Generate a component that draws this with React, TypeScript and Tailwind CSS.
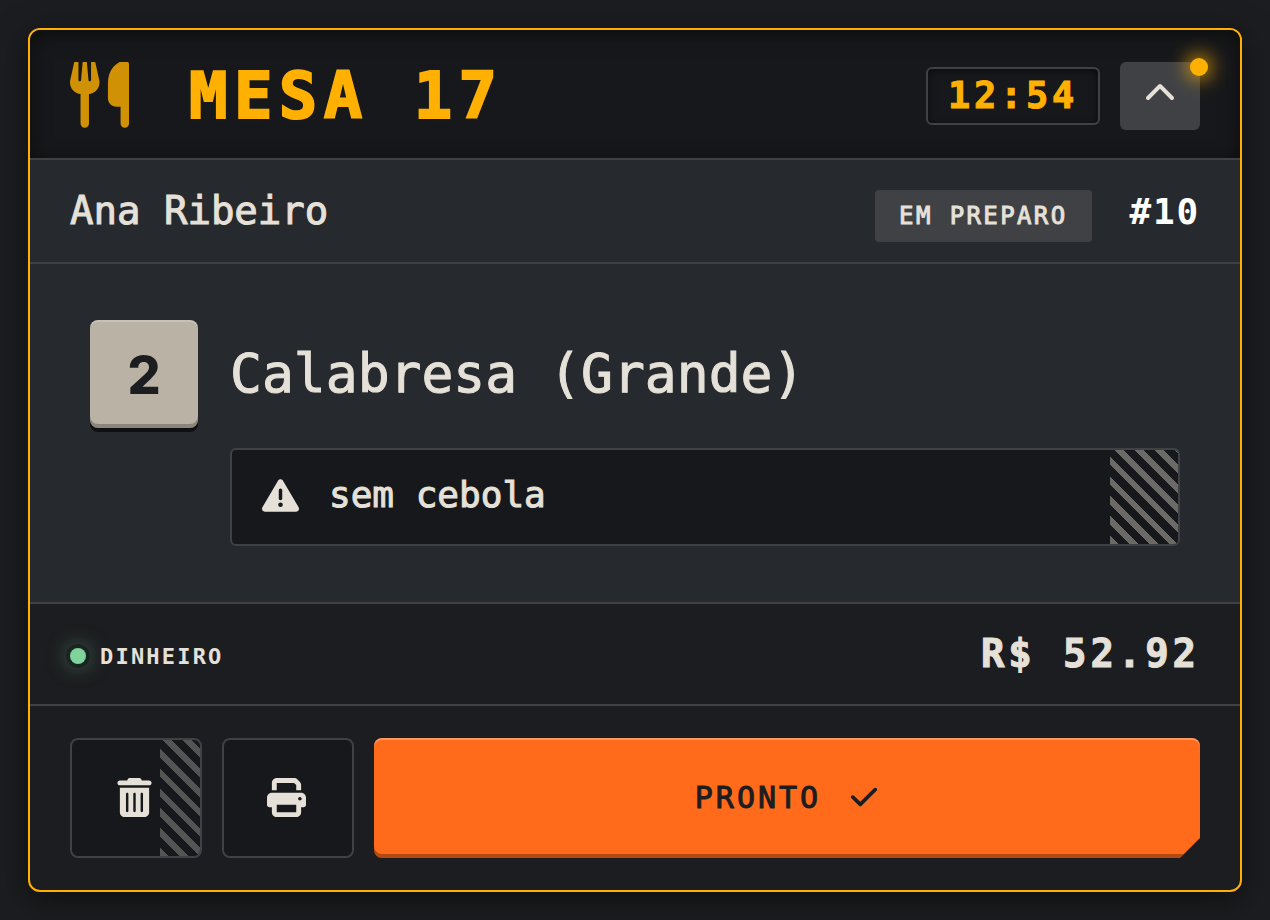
import {
  FaCheck,
  FaChevronUp,
  FaPrint,
  FaTrashCan,
  FaTriangleExclamation,
  FaUtensils,
} from "react-icons/fa6";

const iconButton =
  "relative flex h-[120px] w-[132px] shrink-0 items-center justify-center overflow-hidden rounded-lg border-2 border-[#3f4145] bg-[#17181b] pr-1 pb-0.5 text-[39px]";

function Header() {
  return (
    <header className="flex items-center justify-between border-b-2 border-[#3f4145] bg-[#17181b] px-10 pt-8 pb-7 text-[#ffb000] shadow-[inset_0_4px_20px_rgba(0,0,0,0.5)]">
      <div className="flex items-center gap-[60px]">
        <span className="flex h-[66px] items-end self-start overflow-hidden opacity-80">
          <FaUtensils className="h-[68px] w-[59px] shrink-0" />
        </span>
        <h1 className="text-[64px] leading-[68px] font-bold tracking-widest [-webkit-text-stroke:2px]">
          MESA 17
        </h1>
      </div>
      <div className="flex items-center gap-5">
        <time className="rounded-md border-2 border-[#3f4145] px-5 text-[37px] leading-[54px] font-bold tracking-widest shadow-[inset_0_2px_8px_rgba(0,0,0,0.5)] [-webkit-text-stroke:1px]">
          12:54
        </time>
        <button
          type="button"
          aria-label="Recolher pedido"
          className="relative flex h-[68px] w-20 items-center justify-center rounded-md bg-[#3f4145] pb-1 text-[32px] text-[#e6e1d8]"
        >
          <FaChevronUp />
          <span className="absolute -top-1 -right-2 size-[18px] rounded-full bg-[#ffb000] shadow-[0_0_20px_2px_#ffb000]" />
        </button>
      </div>
    </header>
  );
}

function Customer() {
  return (
    <section className="flex items-baseline justify-between border-b-2 border-[#3f4145] bg-[#262a2e] px-10 pt-[25px] pb-5">
      <h2 className="text-[39px] leading-[52px] [-webkit-text-stroke:1px]">Ana Ribeiro</h2>
      <div className="flex items-baseline gap-[38px]">
        <span className="rounded-sm bg-[#3f4145] px-6 text-2xl leading-[52px] tracking-widest [-webkit-text-stroke:1px]">
          EM PREPARO
        </span>
        <span className="text-4xl leading-[52px] font-bold tracking-wider text-white">#10</span>
      </div>
    </section>
  );
}

function Items() {
  return (
    <ul className="border-b-2 border-[#3f4145] bg-[#26292e] px-[60px] py-14">
      <li className="flex items-start gap-8">
        <span className="flex size-[108px] shrink-0 items-center justify-center rounded-lg bg-[#bab2a5] pt-1 font-[Inter,sans-serif] text-[52px] font-extrabold text-[#1c1d20] shadow-[0_4px_0_#0f1012,inset_0_2px_0_rgba(255,255,255,0.2),inset_0_-4px_0_rgba(0,0,0,0.25)]">
          2
        </span>
        <div className="grow">
          <h3 className="text-[53px] leading-[108px] [-webkit-text-stroke:1px]">Calabresa (Grande)</h3>
          <p className="relative mt-5 flex items-center gap-[30px] overflow-hidden rounded-md border-2 border-[#3f4145] bg-[#17181b] px-[30px] pb-1 text-4xl leading-[90px] [-webkit-text-stroke:1px]">
            <FaTriangleExclamation className="size-[37px] shrink-0" />
            sem cebola
            <span className="absolute inset-y-0 right-0 w-[68px] bg-[repeating-linear-gradient(45deg,#6b6a67_0_6px,transparent_6px_14px)]" />
          </p>
        </div>
      </li>
    </ul>
  );
}

function Payment() {
  return (
    <section className="flex h-[102px] items-center justify-between border-b-2 border-[#3f4145] px-10">
      <span className="flex items-center gap-3.5 pt-1 text-[22px] font-bold tracking-widest">
        <span className="size-4 rounded-full bg-[#7fd39b] shadow-[0_0_0_4px_#1a2421,0_0_20px_2px_rgba(127,211,155,0.5)]" />
        DINHEIRO
      </span>
      <strong className="text-[39px] tracking-widest [-webkit-text-stroke:1px]">R$ 52.92</strong>
    </section>
  );
}

function Actions() {
  return (
    <footer className="flex gap-5 px-10 py-8">
      <button type="button" aria-label="Excluir pedido" className={iconButton}>
        <FaTrashCan />
        <span className="absolute inset-y-0 right-0 w-10 bg-[repeating-linear-gradient(45deg,#545454_0_6px,transparent_6px_14px)]" />
      </button>
      <button type="button" aria-label="Imprimir pedido" className={iconButton}>
        <FaPrint />
      </button>
      <button
        type="button"
        className="flex grow items-center justify-center gap-7 rounded-lg bg-[#ff6b1a] pb-0.5 text-[30px] tracking-widest text-[#1c1d20] shadow-[inset_0_2px_0_rgba(255,255,255,0.3),inset_0_-4px_0_rgba(0,0,0,0.3)] [-webkit-text-stroke:1px] [clip-path:polygon(0_0,100%_0,100%_calc(100%-20px),calc(100%-20px)_100%,0_100%)]"
      >
        PRONTO
        <FaCheck />
      </button>
    </footer>
  );
}

export default function App() {
  return (
    <main className="min-h-screen bg-[#1c1d20] p-7 font-['DejaVu_Sans_Mono',monospace] text-[#e6e1d8]">
      <article className="overflow-hidden rounded-xl border-2 border-[#ffb000] bg-[#1c1d20] shadow-[0_8px_32px_rgba(0,0,0,0.5)]">
        <Header />
        <Customer />
        <Items />
        <Payment />
        <Actions />
      </article>
    </main>
  );
}
